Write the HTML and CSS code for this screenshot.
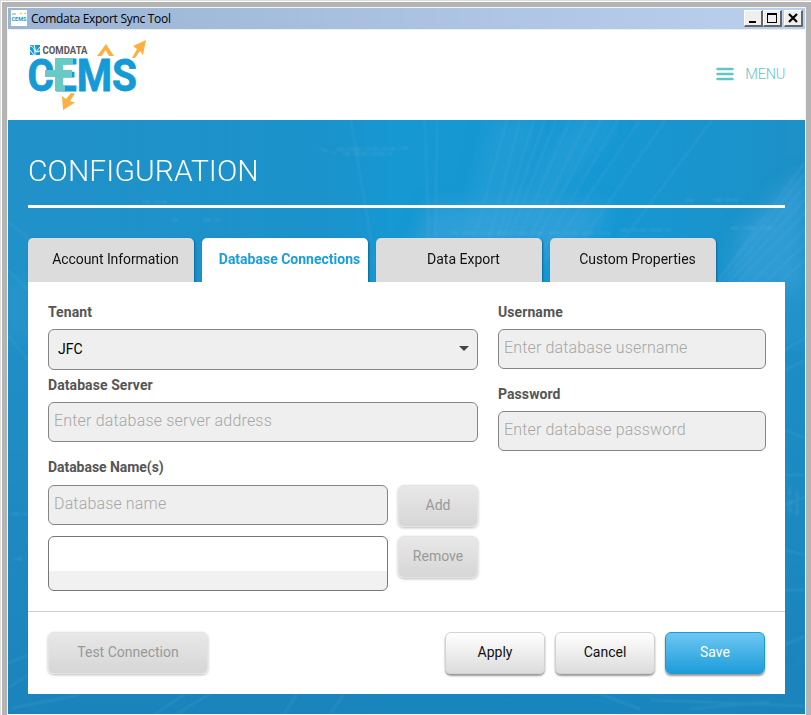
FILE: index.html
```html
<!DOCTYPE html>
<html lang="en">
<head>
<meta charset="utf-8">
<title>Comdata Export Sync Tool</title>
<link rel="stylesheet" href="styles.css">
</head>
<body>
<div class="window">
  <div class="titlebar">
    <svg class="app-icon" width="16" height="16" viewBox="0 0 16 16"><rect width="16" height="16" fill="#fff"/><path d="M1 4h4" stroke="#8a9aa5"/><path d="M9 4l2-1M13 4l2-1" stroke="#f9b54c"/><text x="0.5" y="10.5" class="tiny-logo" textLength="15" lengthAdjust="spacingAndGlyphs">CEMS</text></svg>
    <span class="window-title">Comdata Export Sync Tool</span>
    <div class="controls">
      <span class="ctl"><svg width="18" height="16" shape-rendering="crispEdges"><path d="M5 11h7v2H5z"/></svg></span>
      <span class="ctl max"><svg width="18" height="16" shape-rendering="crispEdges"><path d="M4 3h10v10H4zM5 5v7h8V5z" fill-rule="evenodd"/></svg></span>
      <span class="ctl"><svg width="18" height="16"><path d="M5 4l8 8M13 4l-8 8" stroke="#000" stroke-width="2.2"/></svg></span>
    </div>
  </div>
  <header class="header">
    <svg class="logo" width="126" height="78" viewBox="24 36 126 78">
      <path fill="#149bd7" d="M30 45h10v10H30z"/>
      <path d="M30 46c4 1 5 4 5 9M30 50l4 5M34 45l2 7 4-5M36 52l4-1" stroke="#fff" stroke-width="1" fill="none"/>
      <text x="42.5" y="53.7" class="logo-small" textLength="45" lengthAdjust="spacingAndGlyphs">COMDATA</text>
      <text x="27.5" y="90.9" class="logo-big" textLength="109.500" lengthAdjust="spacingAndGlyphs">CEMS</text>
      <path fill="#69c9c5" d="M55 58h18v6H63v6h9v7h-9v8h2v6H55V77H45v-7h10z"/>
      <g fill="#fbb040">
        <path d="M97 56l9-12 8 12h-5l-3.500-6-4 6z"/>
        <path d="M146 40l-3 15-3-4-5 7h-3l5-9-4-3z"/>
        <path d="M71 93l4 .5-5 7.500 5 1.500-12 7.500-1-14 4 3z"/>
      </g>
    </svg>
    <div class="menu"><svg width="18" height="14"><path d="M1.500 2h15M1.500 7h15M1.500 12h15" stroke="#63c5c4" stroke-width="2.400" stroke-linecap="round"/></svg><span>MENU</span></div>
  </header>
  <main class="page">
    <svg class="backdrop" width="797" height="594" viewBox="8 120 797 594">
      <defs>
        <linearGradient id="sky" x1="0" y1="0" x2="1" y2="0"><stop offset="0" stop-color="#2191c9"/><stop offset=".4" stop-color="#1b92cb"/><stop offset=".48" stop-color="#1698d2"/><stop offset=".75" stop-color="#1698d3"/><stop offset="1" stop-color="#1d90c7"/></linearGradient>
        <linearGradient id="shade" x1="0" y1="0" x2="0" y2="1"><stop offset=".25" stop-color="#1a80b8" stop-opacity="0"/><stop offset="1" stop-color="#1a80b8" stop-opacity=".8"/></linearGradient>
        <filter id="soft" x="-50%" y="-50%" width="200%" height="200%"><feGaussianBlur stdDeviation="9"/></filter>
        <filter id="fine"><feGaussianBlur stdDeviation=".9"/></filter>
      </defs>
      <path fill="url(#sky)" d="M8 120h797v594H8z"/>
      <path fill="url(#shade)" d="M8 120h797v594H8z"/>
      <g fill="#3ba4da" filter="url(#soft)">
        <path d="M740 230l65-60v120h-75zM430 205h180l-30 50H410z" opacity=".6"/>
        <path d="M490 120h50l-40 120h-40zM570 120h50l-80 100h-40z" opacity=".3"/>
        <path d="M8 280h20v60H8zM785 285h20v60h-20z" opacity=".3"/>
      </g>
      <g stroke="#52acdc" fill="none" opacity=".28" filter="url(#fine)" stroke-width="2">
        <path d="M351 120l20 120M425 120l5 162M437 120l-2 162M507 120l-45 162M520 120l-42 162M534 120l-50 162M545 120l-58 162M556 120l-64 162M570 120l-71 162M587 120l-79 162M601 120l-87 162M618 120l-94 162M640 120l-110 162M665 120l-111 162M712 120l-120 162"/>
        <path d="M805 162l-88 120M805 174l-88 108M805 186l-82 96M805 199l-76 83M805 213l-67 69M805 229l-53 53M805 244l-39 38M805 260l-25 22M785 350l20-12M785 370l20-10M785 430l20 8M785 475h20M785 505l20-8M785 550l20 5M785 590h20M785 645l20-9"/>
        <path d="M8 222l29 23M8 270l20 20M8 335l20 25M8 663l20-8M8 688l20-13M12 708l67-13M155 714l30-20M176 714l34-20M284 714l13-20M330 714l14-20M600 694l40 15M650 700l155 6M690 709l80-7"/>
      </g>
      <g stroke="#79bbdf" fill="none" opacity=".2" stroke-width="3" stroke-dasharray="2 1 5 2 1 2 3 1" filter="url(#fine)">
        <path d="M320 149l15 4M336 149h63M342 154h50M142 202h25M170 220h10M203 220h18M450 233h160M620 230h50M713 200h32M685 200h12M730 228h45M400 148h8M11 514h17M14 559h10M790 487v30M797 490v25"/>
      </g>
    </svg>
    <h1>CONFIGURATION</h1>
    <nav class="tabs">
      <div class="tab"><span class="t-account">Account Information</span></div>
      <div class="tab active"><span>Database Connections</span></div>
      <div class="tab"><span>Data Export</span></div>
      <div class="tab"><span>Custom Properties</span></div>
    </nav>
    <section class="panel">
      <div class="form">
        <div class="col left">
          <label class="tenant-label">Tenant</label>
          <div class="field select"><span>JFC</span><svg width="10" height="6"><path d="M0 0h10L5 5z" fill="#444"/></svg></div>
          <label class="server-label">Database Server</label>
          <div class="field hint"><span class="h-server">Enter database server address</span></div>
          <label class="names-label">Database Name(s)</label>
          <div class="names">
            <div class="field hint"><span>Database name</span></div>
            <button class="btn disabled"><span>Add</span></button>
            <div class="list"></div>
            <button class="btn disabled"><span>Remove</span></button>
          </div>
        </div>
        <div class="col right">
          <label class="user-label">Username</label>
          <div class="field hint"><span>Enter database username</span></div>
          <label class="pass-label">Password</label>
          <div class="field hint"><span>Enter database password</span></div>
        </div>
      </div>
      <footer class="actions">
        <button class="btn disabled test"><span>Test Connection</span></button>
        <button class="btn"><span>Apply</span></button>
        <button class="btn"><span>Cancel</span></button>
        <button class="btn primary"><span>Save</span></button>
      </footer>
    </section>
  </main>
</div>
</body>
</html>
```

FILE: styles.css
```css
* { box-sizing: border-box; }
body { margin: 0; width: 811px; height: 715px; overflow: hidden; background: #b4b4b4; font: 14px/20px Roboto, "Liberation Sans", sans-serif; color: #111; border-top: 1px solid #ddd; border-left: 1px solid #ddd; box-shadow: inset 1px 1px #fff; padding: 6px 5px 0 6px; }
.window { width: 799px; height: 708px; border: 1px solid #f4f4f4; background: #fff; }
.titlebar { display: flex; align-items: center; height: 22px; padding: 0 2px 1px 3px; background: linear-gradient(90deg, #9bb4d3, #b9d1ed); border-bottom: 1px solid #eee; }
.app-icon { flex: none; overflow: visible; }
.tiny-logo { font: 700 6px Roboto, sans-serif; fill: #159bd7; }
.window-title { margin-left: 4px; font: 12px/18px "Open Sans", sans-serif; letter-spacing: -.29px; color: #000; position: relative; top: 1px; }
.controls { display: flex; margin-left: auto; }
.ctl { width: 19px; height: 17px; background: #efefef; border: 1px solid #fff; border-right: 2px solid #666; border-bottom: 2px solid #666; overflow: hidden; }
.ctl svg { display: block; margin: -1px; }
.max { margin-right: 2px; }
.header { height: 90px; display: flex; justify-content: space-between; background: #fff; padding: 6px 20px 0 16px; }
.logo { overflow: visible; }
.logo-small { font: 700 11.3px Roboto, sans-serif; fill: #59595c; }
.logo-big { font: 700 45px Roboto, sans-serif; fill: #149bd7; stroke: #149bd7; stroke-width: .8px; }
.menu { display: flex; align-items: center; gap: 11px; height: 76px; color: #63c5c4; font-weight: 300; font-size: 14.5px; letter-spacing: -.25px; }
.menu span { padding-top: 2px; }
.page { position: relative; height: 594px; padding: 30px 20px 0; overflow: hidden; }
.backdrop { position: absolute; inset: 0; }
h1 { position: relative; height: 58px; margin: 0; border-bottom: 3px solid #fff; font-size: 30px; line-height: 42px; font-weight: 300; letter-spacing: .08px; color: #fff; }
.tabs { position: relative; display: flex; gap: 8px; height: 44px; margin-top: 30px; }
.tab { width: 166px; border-radius: 5px 5px 0 0; background: #dcdcdc; box-shadow: 1px 1px 2px #0a679a; line-height: 43px; text-align: center; padding-left: 9px; white-space: nowrap; }
.tab.active { background: #fff; color: #1a9edc; font-weight: 700; }
.t-account { letter-spacing: -.08px; }
.panel { position: relative; height: 412px; background: #fff; }
.form { display: flex; gap: 20px; height: 329px; padding: 20px 19px 0 20px; }
.left { width: 430px; }
.right { width: 268px; }
label { display: block; height: 20px; font-weight: 700; color: #555; letter-spacing: .08px; }
.field { display: flex; align-items: center; height: 40px; border: 1px solid #858585; border-radius: 6px; background: #efefef; padding: 0 5px 2px; }
.select { height: 41px; padding: 0 8px 1px 9px; justify-content: space-between; color: #000; }
.tenant-label, .user-label { margin-bottom: 7px; }
.server-label { margin: 5px 0 7px; }
.names-label { margin: 15px 0 8px; letter-spacing: -.05px; }
.pass-label { margin: 15px 0 7px; }
.hint { color: #a6a6a6; font-size: 16px; font-weight: 300; letter-spacing: .15px; }
.h-server { letter-spacing: .18px; }
.names { display: grid; grid-template-columns: 340px 80px; grid-template-rows: 40px 55px; gap: 11px 10px; align-items: start; }
.list { height: 55px; border: 1px solid #777; border-radius: 6px; background: linear-gradient(#fff 34px, #f1f1f1 34px); }
.btn { height: 42px; padding: 0 0 2px; border: 1px solid #d2d2d2; border-radius: 6px; background: linear-gradient(#fff, #dcdcdc); box-shadow: 0 2px 2px #999; color: #111; font: 14px/20px Roboto, sans-serif; }
.disabled { border-color: #e4e4e4; background: linear-gradient(#e8e8e8, #d6d6d6); box-shadow: 0 1px 3px #bbb; color: #999; }
.names .btn { padding-bottom: 3px; }
.actions { display: grid; grid-template-columns: 387px 100px 100px 100px; column-gap: 10px; padding: 20px; height: 83px; border-top: 1px solid #ccc; }
.test { width: 160px; }
.primary { color: #fff; border-color: #1b9ad6; background: linear-gradient(#6dc7f2, #1d9dda); }
```
